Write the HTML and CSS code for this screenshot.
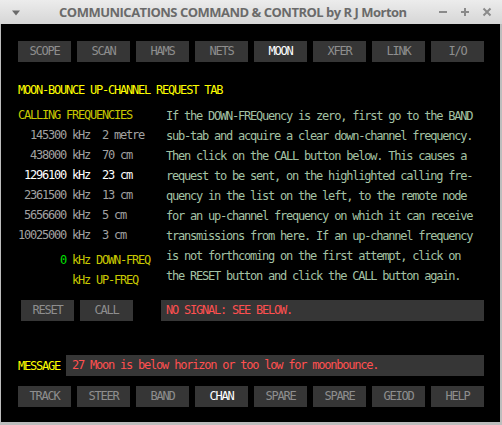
FILE: index.html
```
<!DOCTYPE html>
<html>
<head>
<meta charset="utf-8">
<link rel="stylesheet" href="styles.css">
</head>
<body>
<div class="window">
  <div class="titlebar">
    <svg class="menu-arrow" width="10" height="6" viewBox="0 0 10 6"><path d="M1 0.5 L9 0.5 L5 5.5 Z" fill="#6a6a6a"/></svg>
    <div class="title">COMMUNICATIONS COMMAND &amp; CONTROL by R J Morton</div>
    <div class="controls">
      <svg width="10" height="10" viewBox="0 0 10 10"><path d="M1 5 H9" stroke="#8a8a8a" stroke-width="2"/></svg>
      <svg width="10" height="10" viewBox="0 0 10 10"><path d="M1 5 H9 M5 1 V9" stroke="#8a8a8a" stroke-width="2"/></svg>
      <svg width="10" height="10" viewBox="0 0 10 10"><path d="M1.5 1.5 L8.5 8.5 M8.5 1.5 L1.5 8.5" stroke="#8a8a8a" stroke-width="2"/></svg>
    </div>
  </div>
  <div class="content">
    <nav class="tabs">
      <span class="btn">SCOPE</span>
      <span class="btn">SCAN</span>
      <span class="btn">HAMS</span>
      <span class="btn">NETS</span>
      <span class="btn active">MOON</span>
      <span class="btn">XFER</span>
      <span class="btn">LINK</span>
      <span class="btn">I/O</span>
    </nav>
    <div class="heading">MOON-BOUNCE UP-CHANNEL REQUEST TAB</div>
    <div class="main">
      <div class="left">
        <div class="sub">CALLING FREQUENCIES</div>
        <div class="freq">  145300 kHz  2 metre</div>
        <div class="freq">  438000 kHz  70 cm</div>
        <div class="freq sel"> 1296100 kHz  23 cm</div>
        <div class="freq"> 2361500 kHz  13 cm</div>
        <div class="freq"> 5656600 kHz  5 cm</div>
        <div class="freq">10025000 kHz  3 cm</div>
        <div class="down"><span class="zero">       0</span> kHz DOWN-FREQ</div>
        <div class="up">         kHz UP-FREQ</div>
      </div>
      <div class="help">
        <div>If the DOWN-FREQuency is zero, first go to the BAND</div>
        <div>sub-tab and acquire a clear down-channel frequency.</div>
        <div>Then click on the CALL button below. This causes a</div>
        <div>request to be sent, on the highlighted calling fre-</div>
        <div>quency in the list on the left, to the remote node</div>
        <div>for an up-channel frequency on which it can receive</div>
        <div>transmissions from here. If an up-channel frequency</div>
        <div>is not forthcoming on the first attempt, click on</div>
        <div>the RESET button and click the CALL button again.</div>
      </div>
    </div>
    <div class="actions">
      <span class="btn">RESET</span>
      <span class="btn">CALL</span>
      <div class="status">NO SIGNAL: SEE BELOW.</div>
    </div>
    <div class="message">
      <span class="msg-label">MESSAGE</span>
      <div class="msg-box">27 Moon is below horizon or too low for moonbounce.</div>
    </div>
    <nav class="tabs bottom">
      <span class="btn">TRACK</span>
      <span class="btn">STEER</span>
      <span class="btn">BAND</span>
      <span class="btn active">CHAN</span>
      <span class="btn">SPARE</span>
      <span class="btn">SPARE</span>
      <span class="btn">GEIOD</span>
      <span class="btn">HELP</span>
    </nav>
  </div>
</div>
</body>
</html>
```
FILE: styles.css
```
* { box-sizing: border-box; }
html, body { margin: 0; padding: 0; }
body {
  width: 502px;
  height: 425px;
  background: #bdbdbd;
  overflow: hidden;
}
.window {
  width: 502px;
  height: 425px;
  display: flex;
  flex-direction: column;
}
.titlebar {
  height: 24px;
  flex: none;
  background: linear-gradient(#ececec, #d6d6d6);
  display: flex;
  align-items: center;
}
.menu-arrow {
  margin-left: 11px;
  margin-top: 1px;
}
.title {
  margin-left: 38px;
  font-family: "Open Sans", "Noto Sans", sans-serif;
  font-weight: bold;
  font-size: 13px;
  color: #6a6a6a;
  white-space: nowrap;
  letter-spacing: -0.5px;
}
.controls {
  margin-left: auto;
  margin-right: 10px;
  display: flex;
  gap: 12px;
}
.content {
  flex: none;
  margin: 0 2px 0 1px;
  height: 398px;
  background: #000;
  padding: 17px 16px 0 17px;
  font-family: "DejaVu Sans Mono", "Liberation Mono", monospace;
  font-size: 12px;
  letter-spacing: -1.22px;
  line-height: 20px;
  white-space: nowrap;
}
.tabs {
  display: flex;
  gap: 6px;
}
.btn {
  display: block;
  width: 53px;
  height: 21px;
  line-height: 21px;
  background: #363636;
  color: #8e8e8e;
  text-align: center;
}
.btn.active { color: #ffffff; }
.heading {
  margin-top: 18px;
  color: #ffff00;
}
.main {
  margin-top: 5px;
  display: flex;
}
.left {
  width: 148px;
}
.sub { color: #c8c800; }
.freq { color: #a2a2a2; white-space: pre; }
.freq.sel { color: #ffffff; }
.down { margin-top: 5px; color: #c8c800; white-space: pre; }
.up { color: #c8c800; white-space: pre; }
.zero { color: #00e000; }
.help {
  padding-top: 1px;
  color: #a4c2a4;
}
.actions {
  margin-top: 10px;
  margin-left: 3px;
  display: flex;
  gap: 6px;
}
.status {
  margin-left: 22px;
  width: 323px;
  height: 21px;
  line-height: 21px;
  background: #363636;
  color: #ff5050;
  padding-left: 5px;
}
.message {
  margin-top: 34px;
  display: flex;
  align-items: center;
  gap: 6px;
}
.msg-label { color: #ffff00; }
.msg-box {
  width: 418px;
  height: 21px;
  line-height: 21px;
  background: #363636;
  color: #ff5050;
  padding-left: 6px;
}
.bottom { margin-top: 10px; }
```
